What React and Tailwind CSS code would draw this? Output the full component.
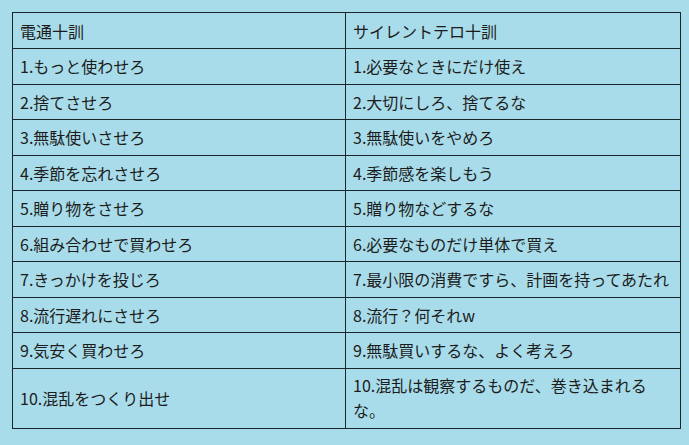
const rows = [
  ["1.もっと使わせろ", "1.必要なときにだけ使え"],
  ["2.捨てさせろ", "2.大切にしろ、捨てるな"],
  ["3.無駄使いさせろ", "3.無駄使いをやめろ"],
  ["4.季節を忘れさせろ", "4.季節感を楽しもう"],
  ["5.贈り物をさせろ", "5.贈り物などするな"],
  ["6.組み合わせで買わせろ", "6.必要なものだけ単体で買え"],
  ["7.きっかけを投じろ", "7.最小限の消費ですら、計画を持ってあたれ"],
  ["8.流行遅れにさせろ", "8.流行？何それw"],
  ["9.気安く買わせろ", "9.無駄買いするな、よく考えろ"],
]

const cell = "border-[1.5px] border-[#1b262b] px-[7px] align-middle whitespace-nowrap"

export default function App() {
  return (
    <div
      className="w-[689px] h-[445px] bg-[#a9dcea] pt-[12px] pl-[12px] text-[16px] text-[#1c1c1c]"
      style={{ fontFamily: '"Noto Sans CJK JP", "Noto Sans", sans-serif' }}
    >
      <table className="border-collapse table-fixed w-[668px]">
        <colgroup>
          <col className="w-[333px]" />
          <col className="w-[335px]" />
        </colgroup>
        <tbody>
          <tr className="h-[36px]">
            <td className={cell}>電通十訓</td>
            <td className={cell}>サイレントテロ十訓</td>
          </tr>
          {rows.map((r, i) => (
            <tr key={i} className="h-[35.5px]">
              <td className={cell}>{r[0]}</td>
              <td className={cell}>{r[1]}</td>
            </tr>
          ))}
          <tr className="h-[60px]">
            <td className={cell}>10.混乱をつくり出せ</td>
            <td className={`${cell} leading-[25px]`}>
              10.混乱は観察するものだ、巻き込まれる
              <br />
              な。
            </td>
          </tr>
        </tbody>
      </table>
    </div>
  )
}
